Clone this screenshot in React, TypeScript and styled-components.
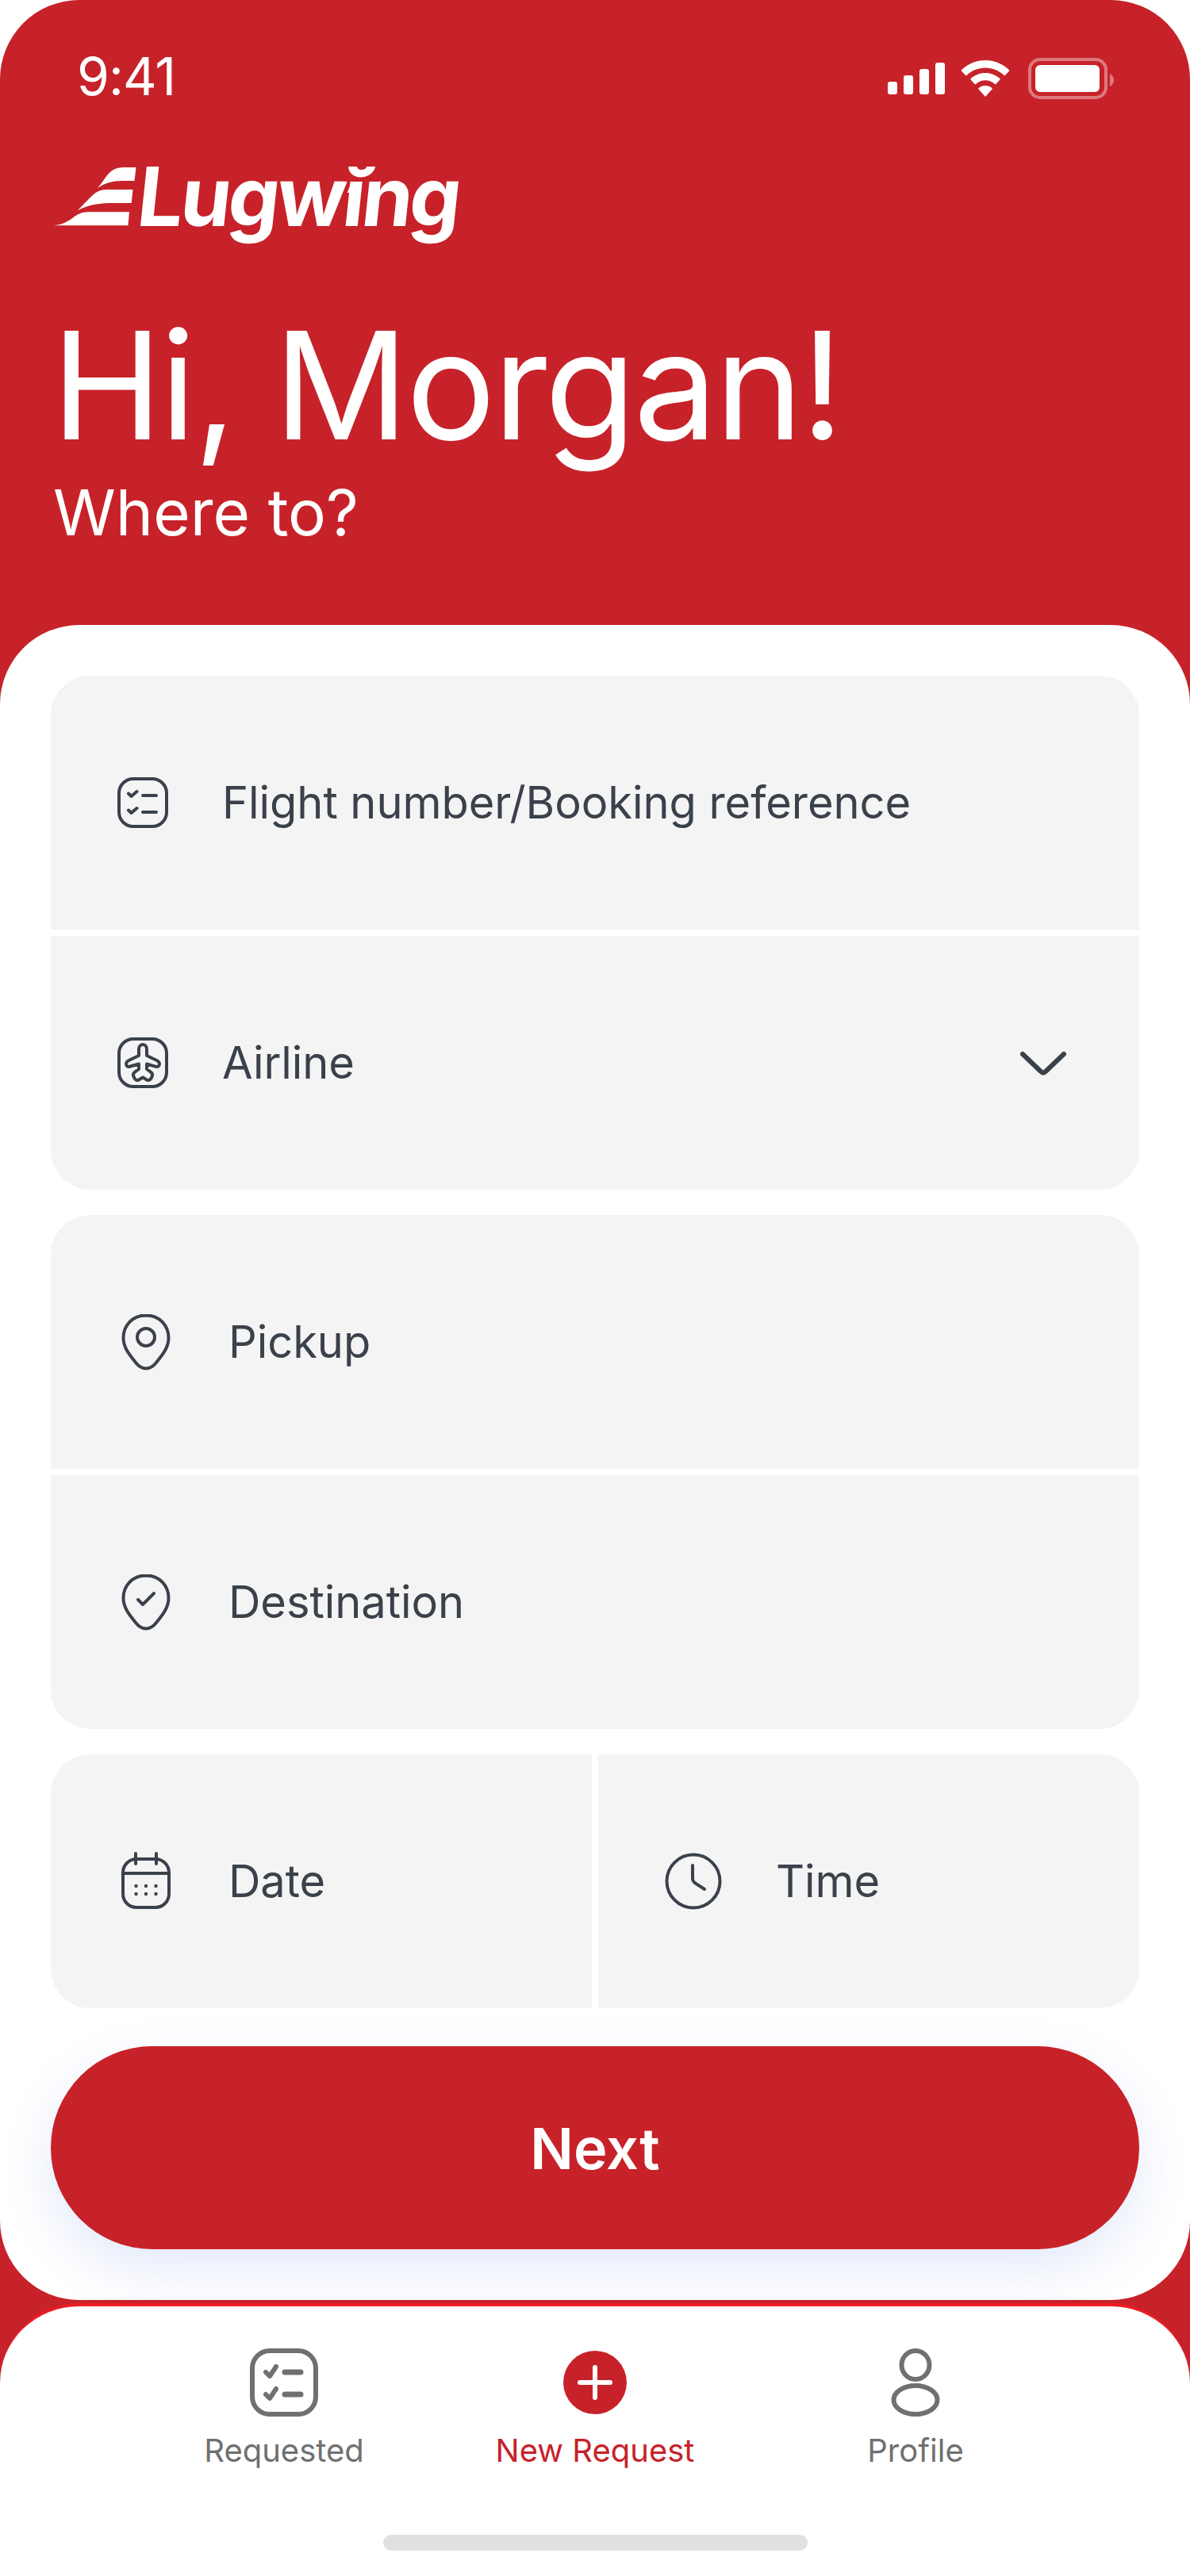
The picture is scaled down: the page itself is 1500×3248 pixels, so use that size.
import React from 'react';
import styled, { createGlobalStyle } from 'styled-components';

const RED = '#c72229';
const INK = '#3a414b';
const MUTED = '#707070';

const GlobalStyle = createGlobalStyle`
  html, body {
    margin: 0;
    padding: 0;
    background: #fff;
  }
  * {
    box-sizing: border-box;
  }
  body {
    font-family: Inter, "Noto Sans", sans-serif;
  }
`;

const Screen = styled.div`
  width: 1500px;
  height: 3248px;
  display: flex;
  flex-direction: column;
  overflow: hidden;
  background: ${RED};
  border-radius: 100px 100px 0 0;
`;

const Header = styled.header`
  height: 788px;
  flex: none;
  color: #fff;
`;

const StatusBar = styled.div`
  height: 208px;
  padding: 0 96px 16px 97px;
  display: flex;
  align-items: center;
  justify-content: space-between;
`;

const Clock = styled.span`
  font-size: 66px;
  font-weight: 400;
  letter-spacing: -1px;
`;

const StatusIcons = styled.div`
  display: flex;
  align-items: center;
  gap: 20px;
  margin-top: 6px;
`;

const Logo = styled.div`
  height: 86px;
  padding-left: 64px;
  display: flex;
  align-items: flex-start;
`;

const Wordmark = styled.span`
  position: relative;
  display: block;
  margin-left: -6px;
  font-size: 103px;
  font-weight: 700;
  line-height: 80px;
  letter-spacing: -4px;
  transform: skewX(-6deg);
  transform-origin: 0 100%;
`;

const Breve = styled.svg`
  position: absolute;
  left: 258px;
  top: -8px;
`;

const Greeting = styled.h1`
  margin: 82px 0 0 65px;
  font-size: 188px;
  font-weight: 400;
  line-height: 220px;
  letter-spacing: -3px;
`;

const SubGreeting = styled.p`
  margin: 2px 0 0 67px;
  font-size: 80px;
  font-weight: 400;
  line-height: 96px;
`;

const Card = styled.main`
  flex: none;
  padding: 64px;
  display: flex;
  flex-direction: column;
  gap: 32px;
  background: #fff;
  border-radius: 100px;
`;

const FieldGroup = styled.div`
  display: flex;
  flex-direction: column;
  gap: 8px;
  border-radius: 50px;
  overflow: hidden;
`;

const SplitGroup = styled(FieldGroup)`
  flex-direction: row;
`;

const Field = styled.div<{ $half?: boolean }>`
  flex: ${(p) => (p.$half ? '1 1 0' : 'none')};
  height: 320px;
  padding: 0 90px 0 80px;
  display: flex;
  align-items: center;
  gap: 64px;
  background: #f4f4f4;
  color: ${INK};
  font-size: 56px;
  letter-spacing: -0.05px;
`;

const FieldIcon = styled.svg`
  flex: none;
  fill: none;
  stroke: ${INK};
  stroke-width: 4;
  stroke-linecap: round;
  stroke-linejoin: round;
`;

const FieldLabel = styled.span`
  flex: 1;
`;

const NextButton = styled.button`
  height: 256px;
  margin-top: 16px;
  border: 0;
  border-radius: 128px;
  background: ${RED};
  color: #fff;
  font-family: inherit;
  font-size: 72px;
  font-weight: 600;
  box-shadow: 0 24px 64px rgba(80, 120, 220, 0.16);
`;

const TabBar = styled.nav`
  flex: 1;
  margin-top: 4px;
  padding: 53px 0 0;
  border-top: 4px solid #ed1c24;
  border-radius: 100px 100px 0 0;
  background: #fff;
`;

const Tabs = styled.div`
  padding-left: 162px;
  display: grid;
  grid-template-columns: 392px 392px 416px;
`;

const Tab = styled.a<{ $active?: boolean }>`
  display: flex;
  flex-direction: column;
  align-items: center;
  gap: 19px;
  color: ${(p) => (p.$active ? RED : MUTED)};
  font-size: 40px;
  line-height: 48px;
`;

const HomeIndicator = styled.div`
  width: 535px;
  height: 20px;
  margin: 82px auto 0;
  border-radius: 10px;
  background: #e0e0e0;
`;

function SignalIcon() {
  return (
    <svg width="72" height="40" viewBox="0 0 72 40" fill="#fff">
      <rect x="0" y="24" width="12" height="16" rx="3" />
      <rect x="20" y="16" width="12" height="24" rx="3" />
      <rect x="40" y="8" width="12" height="32" rx="3" />
      <rect x="60" y="0" width="12" height="40" rx="3" />
    </svg>
  );
}

function WifiIcon() {
  return (
    <svg width="65" height="46" viewBox="0 0 65 46" fill="#fff">
      <path d="M31 0c11.500 0 22 4.500 30 12.200a1 1 0 0 1 0 1.400l-5 5.400a1 1 0 0 1-1.400 0C48.200 13 40 9.600 31 9.600S13.800 13 7.400 19a1 1 0 0 1-1.400 0L1 13.600a1 1 0 0 1 0-1.400C9 4.500 19.500 0 31 0z" />
      <path d="M31 16c7 0 13.500 2.700 18.400 7.200a1 1 0 0 1 0 1.400l-5 5.300a1 1 0 0 1-1.400 0c-3.200-2.900-7.400-4.600-12-4.600s-8.800 1.700-12 4.600a1 1 0 0 1-1.400 0l-5-5.300a1 1 0 0 1 0-1.400C17.500 18.700 24 16 31 16z" />
      <path d="M31 32c3.300 0 6.300 1.200 8.500 3.200a1 1 0 0 1 0 1.400l-7.800 8.600a1 1 0 0 1-1.400 0l-7.800-8.600a1 1 0 0 1 0-1.400C24.700 33.200 27.700 32 31 32z" />
    </svg>
  );
}

function BatteryIcon() {
  return (
    <svg width="108" height="52" viewBox="0 0 108 52">
      <rect x="2" y="2" width="96" height="48" rx="13" fill="none" stroke="#fff" strokeOpacity="0.4" strokeWidth="4" />
      <rect x="9" y="9" width="81" height="34" rx="6" fill="#fff" />
      <path d="M103 20v16c2.800-1.200 5-4.500 5-8s-2.200-6.800-5-8z" fill="#fff" fillOpacity="0.4" />
    </svg>
  );
}

function WingMark() {
  return (
    <svg width="112" height="80" viewBox="64 208 112 80" fill="#fff">
      <path d="M171.500 211l-2 17h-16c-11 0-22 3-30.500 9 8-9 11-17 19-22.500 5-3 9-3.500 14-3.500z" />
      <path d="M167.500 239l-1.800 17h-21c-18 0-33 1.500-47 9.500 9-9 14-15 21-21 5-4 10-5.500 17-5.500z" />
      <path d="M163 267.300l-1.600 17H67c8-.5 15-2.500 24-9 6-5 12-8 19.500-8z" />
    </svg>
  );
}

function ListIcon() {
  return (
    <FieldIcon width="72" height="64" viewBox="-4 0 72 64">
      <rect x="2" y="2" width="60" height="60" rx="18" />
      <path d="M14 20.500l3.500 3.500 7-6M14 41.500l3.500 3.500 7-6M32 23h17M32 44h17" />
    </FieldIcon>
  );
}

function PlaneIcon() {
  return (
    <FieldIcon width="72" height="64" viewBox="-4 0 72 64">
      <rect x="2" y="2" width="60" height="60" rx="18" />
      <path d="M32 9C28.700 9 27 12 27 15V23L14.500 29C12 30.200 11 31.500 11 33.500C11 36 13 37.500 15.500 36.800L27 33.500V40L21.800 43.800C19.800 45.300 19.500 47.500 20.500 49.500L21.800 52C23 54 25 54.600 27 53.500L32 50.500L37 53.500C39 54.600 41 54 42.200 52L43.500 49.500C44.500 47.500 44.200 45.300 42.200 43.800L37 40V33.500L48.500 36.800C51 37.500 53 36 53 33.500C53 31.500 52 30.200 49.500 29L37 23V15C37 12 35.300 9 32 9Z" />
    </FieldIcon>
  );
}

const PIN_OUTLINE =
  'M40 6.500C22.800 6.500 11.500 19.500 11.500 35C11.500 47 19 56 27 66C31 71 35 73.500 40 73.500C45 73.500 49 71 53 66C61 56 68.500 47 68.500 35C68.500 19.500 57.200 6.500 40 6.500Z';

function PinIcon() {
  return (
    <FieldIcon width="80" height="80" viewBox="0 0 80 80">
      <path d={PIN_OUTLINE} />
      <circle cx="40" cy="34" r="11" />
    </FieldIcon>
  );
}

function PinCheckIcon() {
  return (
    <FieldIcon width="80" height="80" viewBox="0 0 80 80">
      <path d={PIN_OUTLINE} />
      <path d="M30 37l6 6 14-14" />
    </FieldIcon>
  );
}

function CalendarIcon() {
  return (
    <FieldIcon width="80" height="80" viewBox="0 0 80 80">
      <rect x="11" y="12" width="58" height="61" rx="17" />
      <path d="M11 30h58M27 5v13M53 5v13" />
      {[27.5, 40, 52.5].map((x) =>
        [46, 56].map((y) => (
          <circle key={`${x}-${y}`} cx={x} cy={y} r="1" strokeWidth="2.400" />
        )),
      )}
    </FieldIcon>
  );
}

function ClockIcon() {
  return (
    <FieldIcon width="80" height="80" viewBox="0 0 80 80">
      <circle cx="40" cy="40" r="33.500" />
      <path d="M39 20v17c0 2 1 3.500 2.500 4.800L54 50" />
    </FieldIcon>
  );
}

function ChevronIcon() {
  return (
    <svg width="66" height="40" viewBox="0 0 66 40" fill="none" stroke={INK} strokeWidth="6" strokeLinecap="round" strokeLinejoin="round">
      <path d="M9 9l23 22c2 2 4 2 6 0L61 9" />
    </svg>
  );
}

function RequestedTabIcon() {
  return (
    <svg width="86" height="86" viewBox="0 0 86 86" fill="none" stroke={MUTED} strokeLinecap="round" strokeLinejoin="round">
      <rect x="3" y="3" width="80" height="80" rx="22" strokeWidth="6" />
      <path d="M20 30l5 5 8-12M20 58l5 5 8-12" strokeWidth="6" />
      <path d="M44 30h20M44 58h20" strokeWidth="7" />
    </svg>
  );
}

function NewRequestTabIcon() {
  return (
    <svg width="86" height="86" viewBox="0 0 86 86">
      <circle cx="43" cy="43" r="40" fill={RED} />
      <path d="M24 43h38M43 24v38" stroke="#fff" strokeWidth="6" strokeLinecap="round" />
    </svg>
  );
}

function ProfileTabIcon() {
  return (
    <svg width="86" height="86" viewBox="0 0 86 86" fill="none" stroke={MUTED} strokeWidth="6">
      <ellipse cx="43" cy="21" rx="17.500" ry="18" />
      <ellipse cx="43" cy="65" rx="27.500" ry="18" />
    </svg>
  );
}

export default function App() {
  return (
    <>
      <GlobalStyle />
      <Screen>
        <Header>
          <StatusBar>
            <Clock>9:41</Clock>
            <StatusIcons>
              <SignalIcon />
              <WifiIcon />
              <BatteryIcon />
            </StatusIcons>
          </StatusBar>
          <Logo>
            <WingMark />
            <Wordmark>
              Lugwing
              {/* the wordmark swaps the dot of the i for a small wing and a flag on the stem */}
              <Breve width="44" height="46" viewBox="0 0 44 46">
                <rect x="0" y="0" width="44" height="29" fill={RED} />
                <path d="M3 10h11c.5 3 3 4 6 4s5.500-1 6-4h11c-1 8-8 13.500-17 13.500S4 18 3 10z" fill="#fff" />
                <path d="M9 29h11v14H5z" fill="#fff" />
              </Breve>
            </Wordmark>
          </Logo>
          <Greeting>Hi, Morgan!</Greeting>
          <SubGreeting>Where to?</SubGreeting>
        </Header>

        <Card>
          <FieldGroup>
            <Field>
              <ListIcon />
              <FieldLabel>Flight number/Booking reference</FieldLabel>
            </Field>
            <Field>
              <PlaneIcon />
              <FieldLabel>Airline</FieldLabel>
              <ChevronIcon />
            </Field>
          </FieldGroup>
          <FieldGroup>
            <Field>
              <PinIcon />
              <FieldLabel>Pickup</FieldLabel>
            </Field>
            <Field>
              <PinCheckIcon />
              <FieldLabel>Destination</FieldLabel>
            </Field>
          </FieldGroup>
          <SplitGroup>
            <Field $half>
              <CalendarIcon />
              <FieldLabel>Date</FieldLabel>
            </Field>
            <Field $half>
              <ClockIcon />
              <FieldLabel>Time</FieldLabel>
            </Field>
          </SplitGroup>
          <NextButton>Next</NextButton>
        </Card>

        <TabBar>
          <Tabs>
            <Tab>
              <RequestedTabIcon />
              Requested
            </Tab>
            <Tab $active>
              <NewRequestTabIcon />
              New Request
            </Tab>
            <Tab>
              <ProfileTabIcon />
              Profile
            </Tab>
          </Tabs>
          <HomeIndicator />
        </TabBar>
      </Screen>
    </>
  );
}
